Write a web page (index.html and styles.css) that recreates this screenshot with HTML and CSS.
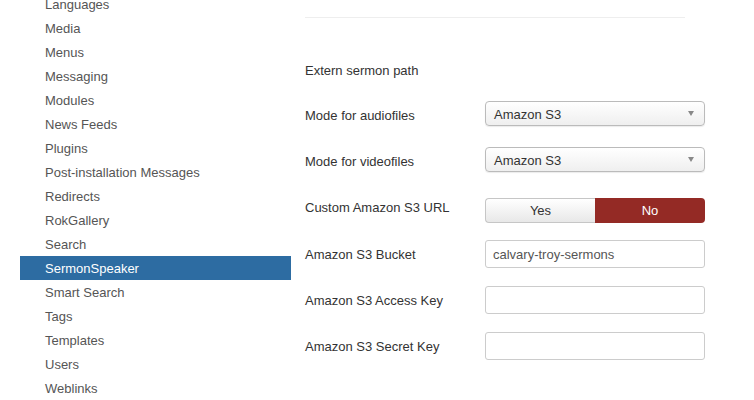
FILE: index.html
```html
<!DOCTYPE html>
<html>
<head>
<meta charset="utf-8">
<link rel="stylesheet" href="styles.css">
</head>
<body>
<div class="page">
  <ul class="sidebar">
    <li class="item">Languages</li>
    <li class="item">Media</li>
    <li class="item">Menus</li>
    <li class="item">Messaging</li>
    <li class="item">Modules</li>
    <li class="item">News Feeds</li>
    <li class="item">Plugins</li>
    <li class="item">Post-installation Messages</li>
    <li class="item">Redirects</li>
    <li class="item">RokGallery</li>
    <li class="item">Search</li>
    <li class="item active">SermonSpeaker</li>
    <li class="item">Smart Search</li>
    <li class="item">Tags</li>
    <li class="item">Templates</li>
    <li class="item">Users</li>
    <li class="item">Weblinks</li>
  </ul>
  <div class="main">
    <div class="rule"></div>
    <div class="row row-extern">
      <div class="label">Extern sermon path</div>
    </div>
    <div class="row row-audio">
      <div class="label">Mode for audiofiles</div>
      <div class="select"><span class="select-text">Amazon S3</span><span class="caret"></span></div>
    </div>
    <div class="row row-video">
      <div class="label">Mode for videofiles</div>
      <div class="select"><span class="select-text">Amazon S3</span><span class="caret"></span></div>
    </div>
    <div class="row row-toggle">
      <div class="label label-tight">Custom Amazon S3 URL</div>
      <div class="toggle">
        <div class="btn btn-yes">Yes</div>
        <div class="btn btn-no">No</div>
      </div>
    </div>
    <div class="row row-input">
      <div class="label">Amazon S3 Bucket</div>
      <div class="input">calvary-troy-sermons</div>
    </div>
    <div class="row row-input">
      <div class="label">Amazon S3 Access Key</div>
      <div class="input"></div>
    </div>
    <div class="row">
      <div class="label">Amazon S3 Secret Key</div>
      <div class="input"></div>
    </div>
  </div>
</div>
</body>
</html>
```
FILE: styles.css
```css
html, body {
  margin: 0;
  padding: 0;
  background: #fff;
  font-family: "Liberation Sans", Arial, Helvetica, sans-serif;
  font-size: 13px;
  overflow: hidden;
}
.page {
  display: flex;
  height: 400px;
}
.sidebar {
  list-style: none;
  margin: -8px 0 0 20px;
  padding: 0;
  width: 271px;
  flex: none;
}
.item {
  box-sizing: border-box;
  height: 24px;
  padding-top: 1px;
  line-height: 23px;
  padding-left: 25px;
  color: #555;
  overflow: visible;
}
.item.active {
  background: #2d6ca2;
  color: #fff;
}
.main {
  margin-left: 14px;
  width: 400px;
  flex: none;
}
.rule {
  margin-top: 17px;
  width: 380px;
  height: 1px;
  background: #eee;
}
.row {
  display: flex;
  align-items: flex-start;
}
.row-extern {
  margin-top: 38px;
  height: 27px;
  margin-bottom: 18px;
}
.row-audio { margin-bottom: 21px; }
.row-video { margin-bottom: 26px; }
.row-toggle { margin-bottom: 17px; }
.row-input { margin-bottom: 18px; }
.label {
  width: 180px;
  flex: none;
  padding-top: 6px;
  line-height: 18px;
  color: #333;
}
.label-tight { padding-top: 1px; }
.select {
  box-sizing: border-box;
  width: 220px;
  height: 25px;
  border: 1px solid #bbb;
  border-radius: 4px;
  background: linear-gradient(#ffffff, #efefef);
  box-shadow: 0 1px 1px rgba(0,0,0,0.08);
  color: #333;
  display: flex;
  align-items: center;
  justify-content: space-between;
  padding: 0 10px 0 8px;
}
.select-text {
  padding-top: 2px;
  line-height: 21px;
}
.caret {
  width: 0;
  height: 0;
  border-left: 3px solid transparent;
  border-right: 3px solid transparent;
  border-top: 5px solid #888;
}
.toggle {
  display: flex;
  width: 220px;
  height: 25px;
}
.btn {
  box-sizing: border-box;
  height: 25px;
  line-height: 25px;
  text-align: center;
  font-size: 13px;
}
.btn-yes {
  width: 110px;
  border: 1px solid #c6c6c6;
  border-right: none;
  border-radius: 4px 0 0 4px;
  background: linear-gradient(#ffffff, #e8e8e8);
  color: #333;
  line-height: 23px;
}
.btn-no {
  width: 110px;
  border-radius: 0 4px 4px 0;
  background: #942a25;
  color: #fff;
}
.input {
  box-sizing: border-box;
  width: 220px;
  height: 28px;
  border: 1px solid #ccc;
  border-radius: 3px;
  padding: 1px 7px 0;
  line-height: 26px;
  color: #555;
}
```
